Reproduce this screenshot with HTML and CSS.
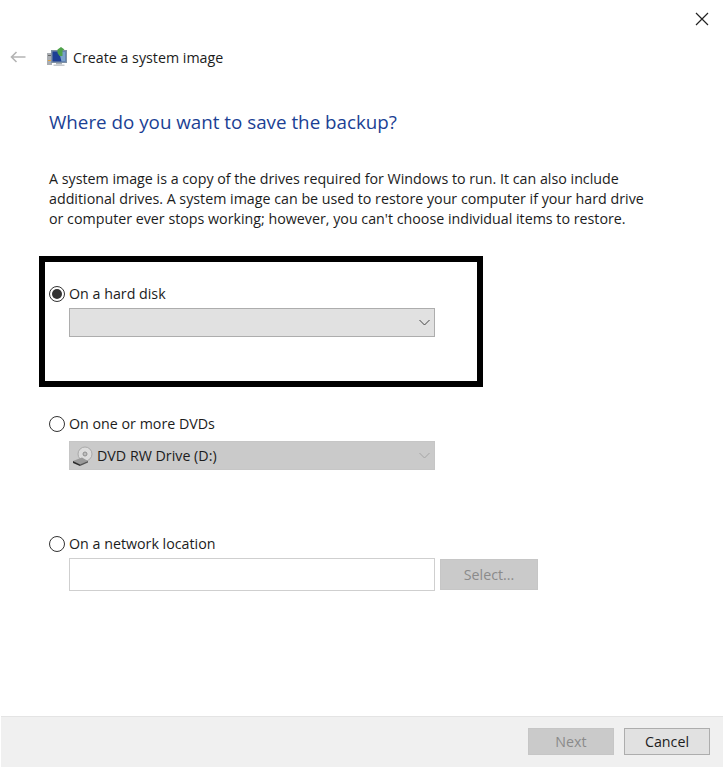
FILE: index.html
```html
<!DOCTYPE html>
<html lang="en">
<head>
  <meta charset="UTF-8">
  <title>Create a system image</title>
  <link rel="stylesheet" href="styles.css">
</head>
<body>
  <div class="window">
    <div class="close-row">
      <svg class="close-icon" width="14" height="14" viewBox="0 0 14 14">
        <path d="M1 1L13 13M13 1L1 13" stroke="#222" stroke-width="1.2" fill="none"/>
      </svg>
    </div>

    <div class="title-row">
      <svg class="back-icon" width="16" height="12" viewBox="0 0 16 12">
        <path d="M15.5 6H1.5M6.5 1L1.5 6L6.5 11" stroke="#b4b4b4" stroke-width="1.6" fill="none"/>
      </svg>
      <svg class="app-icon" width="20" height="20" viewBox="0 0 20 20">
        <rect x="0" y="6" width="5" height="12" fill="#a9adb2"/>
        <rect x="1" y="8" width="3" height="1" fill="#666"/>
        <rect x="1" y="13" width="3" height="1" fill="#e2a23a"/>
        <rect x="4" y="3" width="16" height="13" fill="#7f91a5"/>
        <rect x="5.5" y="4.5" width="13" height="10" fill="#1d3f95"/>
        <path d="M12 4.5H18.5V14.5H14.5Z" fill="#7ba2cc"/>
        <rect x="9" y="16" width="6" height="1.5" fill="#a8adb3"/>
        <rect x="6.5" y="17.5" width="11" height="1.5" fill="#c6c9cd"/>
        <path d="M10.5 6L10.5 2.5L14 0L17.5 2.5L15.5 3.5L15.5 9L12.5 9Z" fill="#4fa24a"/>
      </svg>
      <span class="title-text">Create a system image</span>
    </div>

    <main class="content">
      <h1 class="heading">Where do you want to save the backup?</h1>
      <p class="intro">A system image is a copy of the drives required for Windows to run. It can also include additional drives. A system image can be used to restore your computer if your hard drive or computer ever stops working; however, you can't choose individual items to restore.</p>

      <section class="option option-disk">
        <label class="radio-row"><span class="radio radio-checked"></span>On a hard disk</label>
        <div class="combo">
          <svg class="chevron" width="11" height="7" viewBox="0 0 11 7">
            <path d="M0.5 1L5.5 6L10.5 1" stroke="#444" stroke-width="1" fill="none"/>
          </svg>
        </div>
      </section>

      <section class="option option-dvd">
        <label class="radio-row"><span class="radio"></span>On one or more DVDs</label>
        <div class="combo combo-disabled">
          <svg class="drive-icon" width="22" height="20" viewBox="0 0 22 20">
            <ellipse cx="13" cy="8" rx="7" ry="7" fill="#dcdcdc" stroke="#a9a9a9"/>
            <circle cx="13" cy="8" r="2" fill="#bdbdbd" stroke="#8e8e8e"/>
            <path d="M1 15L10 11.5L16 15L8 19Z" fill="#9a9a9a"/>
            <path d="M1 15L8 18.5L8 20L1 17Z" fill="#2c2c2c"/>
            <path d="M8 18.5L16 15L16 16.5L8 20Z" fill="#555"/>
          </svg>
          <span class="combo-text">DVD RW Drive (D:)</span>
          <svg class="chevron" width="11" height="7" viewBox="0 0 11 7">
            <path d="M0.5 1L5.5 6L10.5 1" stroke="#a4a4a4" stroke-width="1" fill="none"/>
          </svg>
        </div>
      </section>

      <section class="option option-network">
        <label class="radio-row"><span class="radio"></span>On a network location</label>
        <div class="network-row">
          <div class="text-input"></div>
          <button class="btn btn-disabled btn-select">Select...</button>
        </div>
      </section>
    </main>

    <div class="footer">
      <button class="btn btn-disabled">Next</button>
      <button class="btn">Cancel</button>
    </div>

    <!-- black box someone drew over the screenshot -->
    <div class="annotation"></div>
  </div>
</body>
</html>
```

FILE: styles.css
```css
* {
  box-sizing: border-box;
}
body {
  margin: 0;
  background: #fff;
  font-family: "Open Sans", "Noto Sans", sans-serif;
  font-size: 14.25px;
  color: #1c1c1c;
}
.window {
  position: relative;
  display: flex;
  flex-direction: column;
  width: 724px;
  height: 767px;
  overflow: hidden;
}
.close-row {
  display: flex;
  justify-content: flex-end;
  height: 47px;
  padding: 12px 15px 0 0;
}
.close-icon {
  display: block;
}
.title-row {
  display: flex;
  align-items: center;
  height: 20px;
  padding-left: 10px;
}
.back-icon {
  margin-right: 21px;
}
.app-icon {
  margin-right: 6px;
}
.heading {
  margin: 41px 0 0;
  font-size: 18.8px;
  font-weight: 400;
  line-height: 28px;
  color: #1b3f94;
}
.content {
  flex: 1;
  padding: 0 49px;
}
.intro {
  width: 600px;
  margin: 33px 0 0;
  line-height: 20px;
}
.option {
  height: 120px;
}
.option-disk {
  margin-top: 55px;
}
.option-dvd,
.option-network {
  padding-top: 10px;
}
.radio-row {
  display: flex;
  align-items: center;
  height: 20px;
  line-height: 20px;
}
.radio {
  position: relative;
  flex: none;
  width: 16px;
  height: 16px;
  margin-right: 4px;
  border: 1.5px solid #333;
  border-radius: 50%;
  background: #fff;
}
.radio-checked::after {
  content: '';
  position: absolute;
  top: 1.5px;
  left: 1.5px;
  width: 10px;
  height: 10px;
  border-radius: 50%;
  background: #333;
}
.combo {
  display: flex;
  align-items: center;
  width: 366px;
  height: 29px;
  margin: 4px 0 0 20px;
  padding: 0 4px 0 2px;
  border: 1px solid #adadad;
  background: #e1e1e1;
}
.combo .chevron {
  margin-left: auto;
}
.combo-disabled {
  margin-top: 7px;
  border-color: #c6c6c6;
  background: #cacaca;
}
.drive-icon {
  margin-right: 3px;
}
.network-row {
  display: flex;
  align-items: center;
  margin: 4px 0 0 20px;
}
.text-input {
  width: 366px;
  height: 33px;
  border: 1px solid #cfcfcf;
  background: #fff;
}
.btn {
  width: 86px;
  height: 27px;
  padding: 0;
  border: 1px solid #adadad;
  background: #e1e1e1;
  font-family: inherit;
  font-size: 14.25px;
  color: #1c1c1c;
}
.btn-disabled {
  border-color: #c6c6c6;
  background: #cacaca;
  color: #8a8a8a;
}
.btn-select {
  width: 98px;
  height: 31px;
  margin-left: 5px;
}
.footer {
  display: flex;
  justify-content: flex-end;
  gap: 10px;
  height: 51px;
  margin: 0 1px;
  padding: 11px 13px 0 0;
  border-top: 1px solid #e4e4e4;
  background: #f0f0f0;
}
.annotation {
  position: absolute;
  top: 256px;
  left: 39px;
  width: 444px;
  height: 131px;
  border: 6px solid #000;
}
```
